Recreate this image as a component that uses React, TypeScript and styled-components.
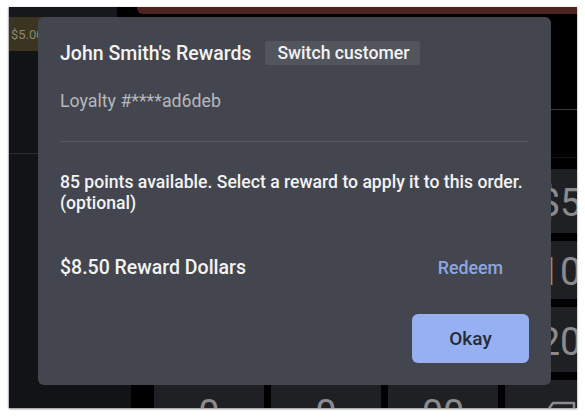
import React from "react";
import styled, { createGlobalStyle } from "styled-components";

const Global = createGlobalStyle`
  html, body { margin: 0; padding: 0; background: #ffffff; }
  body { font-family: Roboto, "Noto Sans", "Liberation Sans", sans-serif; }
  * { box-sizing: border-box; }
`;

const Page = styled.div`
  width: 585px;
  height: 417px;
  padding: 7px 8px 9px 9px;
`;

const Frame = styled.div`
  position: relative;
  width: 568px;
  height: 401px;
  background: #000;
  overflow: hidden;
  display: flex;
  flex-direction: column;
  box-shadow: 0 1px 2px rgba(0, 0, 0, 0.45), -1px 0 1px rgba(0, 0, 0, 0.15);
`;

const TopStrip = styled.div`
  display: flex;
  height: 10px;
  flex: none;
`;

const TopLeft = styled.div`
  width: 108px;
  flex: none;
  background: #17181b;
`;

const TopGap = styled.div`
  width: 20px;
  flex: none;
`;

const RedBar = styled.div`
  flex: 1;
  height: 7px;
  background: #4e2423;
  border-bottom-left-radius: 6px;
`;

const Body = styled.div`
  flex: 1;
  display: flex;
  min-height: 0;
`;

const LeftCol = styled.div`
  width: 122px;
  flex: none;
  background: #121316;
  display: flex;
  flex-direction: column;
`;

const OliveBlock = styled.div`
  height: 34px;
  background: #3a3420;
  color: #8c8772;
  font-size: 13px;
  display: flex;
  align-items: center;
  padding-left: 2px;
`;

const LeftLine = styled.div`
  margin-top: 102px;
  height: 1px;
  background: #2b2c30;
`;

const RightArea = styled.div`
  flex: 1;
  min-width: 0;
  display: flex;
  flex-direction: column;
  padding-left: 23px;
`;

const Display = styled.div`
  height: 152px;
  flex: none;
  display: flex;
  flex-direction: column;
  margin-left: -23px;
`;

const DisplayLine = styled.div<{ $top: number; $color: string }>`
  margin-top: ${(p) => p.$top}px;
  height: 1px;
  background: ${(p) => p.$color};
`;

const Keypad = styled.div`
  display: grid;
  grid-template-columns: repeat(4, 110px);
  grid-template-rows: 64px 58px 65px 64px;
  column-gap: 7px;
  row-gap: 8px;
`;

const Key = styled.div`
  background: #1f2023;
  color: #8b8b8d;
  font-size: 38px;
  display: flex;
  align-items: center;
  justify-content: center;
  padding-top: 4px;
`;

const Modal = styled.div`
  position: absolute;
  left: 29px;
  top: 10px;
  width: 513px;
  height: 368px;
  background: #43464e;
  border-radius: 6px;
  padding: 24px 22px 22px 22px;
  display: flex;
  flex-direction: column;
  color: #f3f3f4;
`;

const HeaderRow = styled.div`
  display: flex;
  align-items: center;
  gap: 14px;
  height: 24px;
`;

const Title = styled.div`
  font-size: 19.5px;
  font-weight: 500;
  line-height: 24px;
  margin-top: 2px;
`;

const SwitchButton = styled.button`
  border: none;
  background: #52555c;
  color: #f3f3f4;
  font-family: inherit;
  font-size: 17.6px;
  font-weight: 500;
  height: 24px;
  padding: 0 11px 0 12px;
  border-radius: 2px;
  line-height: 24px;
`;

const Loyalty = styled.div`
  margin-top: 26px;
  font-size: 17.75px;
  line-height: 20px;
  color: #b6b8bc;
`;

const Divider = styled.div`
  margin-top: 30px;
  height: 1px;
  background: #565961;
`;

const Description = styled.div`
  margin-top: 30px;
  font-size: 17.6px;
  line-height: 21px;
  font-weight: 500;
  color: #f3f3f4;
`;

const RewardRow = styled.div`
  margin-top: 42px;
  display: flex;
  align-items: center;
  justify-content: space-between;
  height: 24px;
`;

const RewardLabel = styled.div`
  font-size: 19.5px;
  font-weight: 500;
  line-height: 24px;
`;

const RedeemButton = styled.button`
  border: none;
  background: transparent;
  color: #8ea6df;
  font-family: inherit;
  font-size: 17.8px;
  font-weight: 500;
  padding: 0 26px 0 12px;
  line-height: 24px;
`;

const Footer = styled.div`
  margin-top: auto;
  display: flex;
  justify-content: flex-end;
`;

const OkayButton = styled.button`
  border: none;
  width: 117px;
  height: 49px;
  border-radius: 6px;
  background: #97b0f1;
  color: #262b37;
  font-family: inherit;
  font-size: 19px;
  font-weight: 500;
`;

const BackspaceIcon = () => (
  <svg width="34" height="26" viewBox="0 0 34 26" fill="none" stroke="#8b8b8d" strokeWidth="2.5">
    <path d="M10 2 H31 V24 H10 L2 13 Z" strokeLinejoin="round" />
    <path d="M16 8 L25 18 M25 8 L16 18" />
  </svg>
);

const keys: (string | null)[] = [
  null, null, null, "$5",
  null, null, null, "10",
  null, null, null, "20",
  "0", "0", "00", "back",
];

export default function App() {
  return (
    <>
      <Global />
      <Page>
        <Frame>
          <TopStrip>
            <TopLeft />
            <TopGap />
            <RedBar />
          </TopStrip>
          <Body>
            <LeftCol>
              <OliveBlock>$5.00</OliveBlock>
              <LeftLine />
            </LeftCol>
            <RightArea>
              <Display>
                <DisplayLine $top={92} $color="#3a3b3e" />
                <DisplayLine $top={47} $color="#141416" />
              </Display>
              <Keypad>
                {keys.map((k, i) => (
                  <Key key={i}>{k === "back" ? <BackspaceIcon /> : k}</Key>
                ))}
              </Keypad>
            </RightArea>
          </Body>

          <Modal>
            <HeaderRow>
              <Title>John Smith's Rewards</Title>
              <SwitchButton>Switch customer</SwitchButton>
            </HeaderRow>
            <Loyalty>Loyalty #****ad6deb</Loyalty>
            <Divider />
            <Description>
              85 points available. Select a reward to apply it to this order.
              <br />
              (optional)
            </Description>
            <RewardRow>
              <RewardLabel>$8.50 Reward Dollars</RewardLabel>
              <RedeemButton>Redeem</RedeemButton>
            </RewardRow>
            <Footer>
              <OkayButton>Okay</OkayButton>
            </Footer>
          </Modal>
        </Frame>
      </Page>
    </>
  );
}
